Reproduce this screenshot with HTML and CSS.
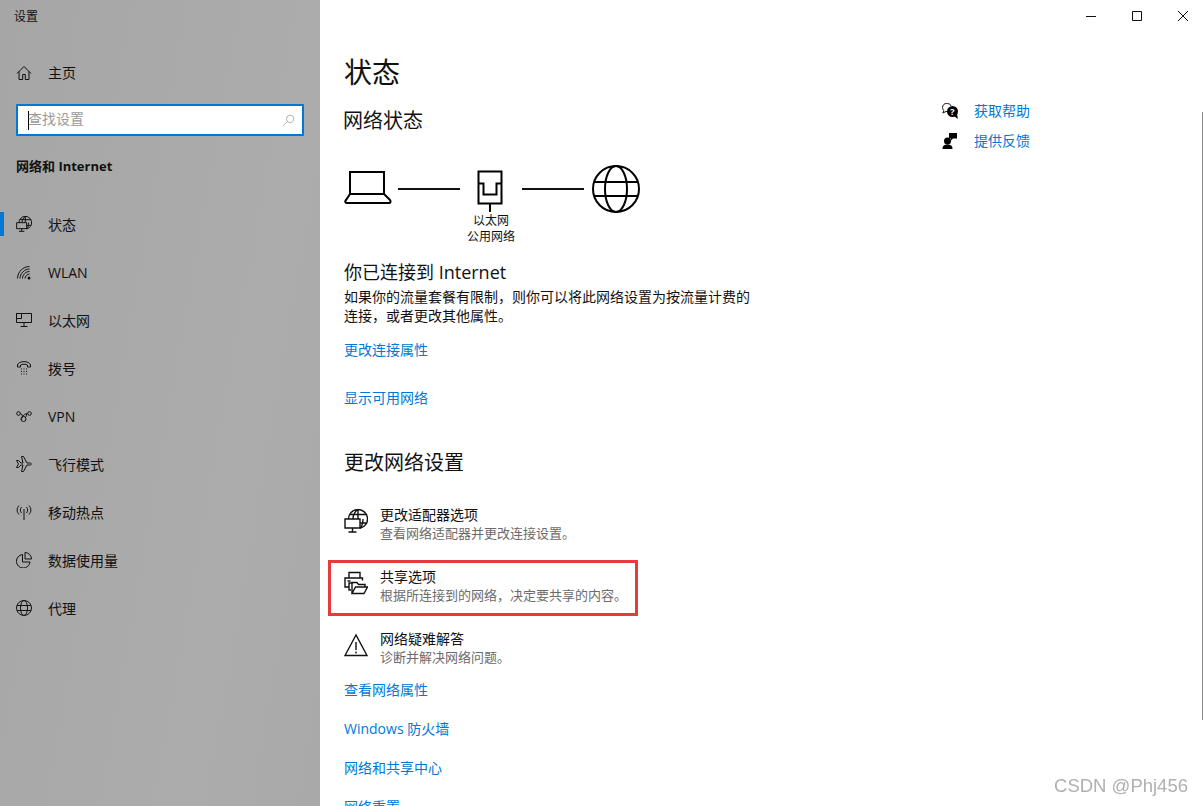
FILE: index.html
```html
<!DOCTYPE html>
<html lang="zh-CN">
<head>
    <meta charset="UTF-8">
    <meta name="viewport" content="width=device-width, initial-scale=1.0">
    <title>设置</title>
    <link rel="stylesheet" href="styles.css">
</head>
<body>
<div class="window">

    <!-- Left navigation -->
    <aside class="sidebar">
        <div class="app-title">设置</div>
        <div class="home-row">
            <svg class="nav-icon" viewBox="0 0 16 16"><path d="M1 8.5 8 1.5l7 7M3 6.5v8h3.7V9.5h2.6v5H13v-8"/></svg>
            <span>主页</span>
        </div>
        <div class="search-box">
            <span class="caret"></span>
            <span class="search-text">查找设置</span>
            <svg class="search-icon" viewBox="0 0 16 16"><circle cx="10" cy="6" r="4.5"/><path d="M6.8 9.2 1.5 14.5"/></svg>
        </div>
        <div class="group-title">网络和 Internet</div>
        <nav class="nav-list">
            <div class="nav-item active">
                <svg class="nav-icon wide-stroke" viewBox="0 0 24 24"><path d="M4.5 10A9.5 9.5 0 1 1 16 19.3M5.6 5.5h16.8M14 .5V10M9 10c0-4 2-7.5 5-9.5M19 10c0 4-1 7-3 9.300M16 14h6.600"/><path d="M1 10h15v9H1zM8.500 19v3.500M4.500 23h8"/></svg>
                <span>状态</span>
            </div>
            <div class="nav-item">
                <svg class="nav-icon" viewBox="0 0 16 16"><path d="M1.5 14.5C1.5 8 7 2.5 13.5 2.5M4 14.500C4 9.500 8.500 5 13.500 5M6.500 14.500c0-3.500 3-7 7-7M9 14.500c0-2 2-4.500 4.500-4.500"/><circle class="solid" cx="13" cy="14" r="1.5"/></svg>
                <span>WLAN</span>
            </div>
            <div class="nav-item">
                <svg class="nav-icon" viewBox="0 0 16 16"><path d="M5.500 1.500h10v9h-15v-9h2M.5 1.500h5v5h-5zM8 10.500v4M4.500 14.500h7"/></svg>
                <span>以太网</span>
            </div>
            <div class="nav-item">
                <svg class="nav-icon" viewBox="0 0 16 16"><path d="M1.500 7V5c1-4.500 12-4.500 13 0v2h-3V5c-1-1-6-1-7 0v2z"/><path class="dots" d="M5 9h6M5 11.500h6M5 14h6"/></svg>
                <span>拨号</span>
            </div>
            <div class="nav-item">
                <svg class="nav-icon" viewBox="0 0 16 16"><circle cx="2.500" cy="5.500" r="1.800"/><circle cx="13.500" cy="5.500" r="1.800"/><circle cx="7.500" cy="11" r="2.500"/><path d="M4.300 5.500c2 0 2 3 2.500 3.500M9.500 9.500c1.500-1 0-4 2.300-4M5.500 12.500c-1-2 3-7 5-7"/></svg>
                <span>VPN</span>
            </div>
            <div class="nav-item">
                <svg class="nav-icon" viewBox="0 0 16 16"><path d="M.5 4.500 2.500 8l-2 3.500h2L5 9h2L5.500 15.500h2L11 9h2.500c2.500 0 2.500-2 0-2H11L7.500.5h-2L7 7H5L2.500 4.500z"/></svg>
                <span>飞行模式</span>
            </div>
            <div class="nav-item">
                <svg class="nav-icon" viewBox="0 0 16 16"><path d="M8 5v11M3 1.500c-2.500 3-2.500 6 0 9M13 1.500c2.500 3 2.500 6 0 9M5.500 3c-1.500 2-1.500 4 0 6M10.500 3c1.500 2 1.500 4 0 6"/></svg>
                <span>移动热点</span>
            </div>
            <div class="nav-item">
                <svg class="nav-icon" viewBox="0 0 16 16"><path d="M6.500 2.500a6.800 6.800 0 1 0 7.500 7.500H6.500zM9 .5a6.500 6.500 0 0 1 6.500 6.500H9z"/></svg>
                <span>数据使用量</span>
            </div>
            <div class="nav-item">
                <svg class="nav-icon" viewBox="0 0 16 16"><circle cx="8" cy="8" r="7.500"/><ellipse cx="8" cy="8" rx="3.500" ry="7.500"/><path d="M1.200 5.500h13.600M1.200 10.500h13.600"/></svg>
                <span>代理</span>
            </div>
        </nav>
    </aside>

    <!-- Right pane -->
    <main class="pane">
        <div class="titlebar">
            <div class="win-btn"><svg viewBox="0 0 10 10"><path d="M0 5.500h10"/></svg></div>
            <div class="win-btn"><svg viewBox="0 0 10 10"><path d="M.5.5h9v9h-9z"/></svg></div>
            <div class="win-btn"><svg viewBox="0 0 10 10"><path d="m0 0 10 10M10 0 0 10"/></svg></div>
        </div>

        <div class="pane-body">
            <section class="content">
                <h1 class="page-title">状态</h1>
                <h2 class="section-title">网络状态</h2>

                <div class="diagram">
                    <svg class="laptop" viewBox="0 0 48 36"><path d="M6 2h34v22H6zM6 24l-4 6c-1.500 1.500-.5 3 1 3h42c1.500 0 2-1.500 1-3l-6-6"/></svg>
                    <span class="link-line"></span>
                    <div class="adapter">
                        <svg viewBox="0 0 26 42"><path d="M1.500 1.500h23v32h-23zM1.500 13.500h5v11h13v-11h5M13 33.500V42"/></svg>
                        <div class="adapter-label">以太网<br>公用网络</div>
                    </div>
                    <span class="link-line second"></span>
                    <svg class="globe" viewBox="0 0 48 48"><circle cx="24" cy="24" r="23"/><ellipse cx="24" cy="24" rx="11" ry="23"/><path d="M3 17h42M3 31h42"/></svg>
                </div>

                <h3 class="connected">你已连接到 Internet</h3>
                <p class="connected-text">如果你的流量套餐有限制，则你可以将此网络设置为按流量计费的连接，或者更改其他属性。</p>
                <a class="link first-link">更改连接属性</a>
                <a class="link second-link">显示可用网络</a>

                <h2 class="section-title change-title">更改网络设置</h2>

                <div class="setting">
                    <svg class="setting-icon" viewBox="0 0 24 24"><path d="M4.500 10A9.500 9.500 0 1 1 16 19.300M5.600 5.500h16.800M14 .5V10M9 10c0-4 2-7.500 5-9.500M19 10c0 4-1 7-3 9.300M16 14h6.600"/><path d="M1 10h15v9H1zM8.500 19v3.500M4.500 23h8"/></svg>
                    <div>
                        <div class="setting-name">更改适配器选项</div>
                        <div class="setting-desc">查看网络适配器并更改连接设置。</div>
                    </div>
                </div>
                <div class="setting marked">
                    <svg class="setting-icon" viewBox="0 0 24 24"><path d="M5 7V1.500h11V7M4.500 16H1V7h17.500v2.500M3.500 10h3M9 12H5v7h2"/><path d="M8 22.500v-11h5l1.500 2H21v3M8 22.500l3.500-6.500h12L20 22.500z"/></svg>
                    <div>
                        <div class="setting-name">共享选项</div>
                        <div class="setting-desc">根据所连接到的网络，决定要共享的内容。</div>
                    </div>
                </div>
                <div class="setting">
                    <svg class="setting-icon" viewBox="0 0 24 24"><path d="M12 2 1 22.500h22zM12 9v8M12 18.500v2"/></svg>
                    <div>
                        <div class="setting-name">网络疑难解答</div>
                        <div class="setting-desc">诊断并解决网络问题。</div>
                    </div>
                </div>

                <a class="link bottom-link">查看网络属性</a>
                <a class="link bottom-link">Windows 防火墙</a>
                <a class="link bottom-link">网络和共享中心</a>
                <a class="link bottom-link">网络重置</a>
            </section>

            <aside class="help">
                <div class="help-row">
                    <svg class="help-icon" viewBox="0 0 16 16"><path d="M9 3C9 1 6 .5 4.500.5 2 .5.500 2.300.500 4.500c0 1.500.8 2.500 1.500 3L.8 10 4 8.500h2"/><circle class="solid" cx="10.500" cy="8.500" r="5.500"/><path class="solid" d="m12 13 4 3-1-5z"/><text class="help-mark" x="10.500" y="11.500">?</text></svg>
                    <a class="link">获取帮助</a>
                </div>
                <div class="help-row">
                    <svg class="help-icon" viewBox="0 0 16 16"><circle class="solid" cx="5.500" cy="8" r="3.500"/><path class="solid" d="M.5 16c0-3.500 2-4.500 5-4.500s5 1 5 4.500zM7 0h8v5.500h-4L9 7.500v-2H7z"/></svg>
                    <a class="link">提供反馈</a>
                </div>
            </aside>
        </div>
    </main>
</div>

<div class="scrollbar"></div>
<div class="watermark">CSDN @Phj456</div>
</body>
</html>
```

FILE: styles.css
```css
* {
    box-sizing: border-box;
}

html, body {
    margin: 0;
    height: 100%;
    overflow: hidden;
}

body {
    font-family: "Open Sans", "Noto Sans CJK SC", sans-serif;
    font-size: 14px;
    color: #111;
    background-color: #fff;
}

.window {
    display: flex;
    height: 806px;
    overflow: hidden;
}

/* Left navigation */
.sidebar {
    width: 320px;
    flex-shrink: 0;
    background: linear-gradient(100deg, #a6a6a6 0%, #acacac 70%, #a9a9a9 100%);
}

.app-title {
    height: 34px;
    padding: 7px 0 0 14px;
    font-size: 12px;
    line-height: 20px;
}

.home-row {
    display: flex;
    align-items: center;
    gap: 16px;
    height: 24px;
    margin-top: 27px;
    padding-left: 16px;
    line-height: 24px;
}

.nav-icon {
    width: 16px;
    height: 16px;
    flex-shrink: 0;
    fill: none;
    stroke: #111;
    stroke-width: 1;
}

.nav-icon.wide-stroke {
    stroke-width: 1.5;
}

.nav-icon .solid {
    fill: #111;
    stroke: none;
}

.nav-icon .dots {
    stroke-dasharray: 1 1.5;
}

.search-box {
    display: flex;
    align-items: center;
    width: 288px;
    height: 32px;
    margin: 19px 0 0 16px;
    padding: 0 7px 0 10px;
    background-color: #fff;
    border: 2px solid #0078d7;
}

.caret {
    width: 1px;
    height: 19px;
    margin-right: -1px;
    background-color: #000;
}

.search-text {
    flex: 1;
    padding-bottom: 4px;
    color: #9a9a9a;
}

.search-icon {
    width: 13px;
    height: 13px;
    fill: none;
    stroke: #a8a8a8;
    stroke-width: 1.1;
}

.group-title {
    margin: 19px 0 0 16px;
    height: 22px;
    line-height: 22px;
    font-weight: 700;
    font-size: 13px;
}

.nav-list {
    margin-top: 23px;
}

.nav-item {
    position: relative;
    display: flex;
    align-items: center;
    gap: 16px;
    height: 48px;
    padding-left: 16px;
}

.nav-item.active::before {
    content: "";
    position: absolute;
    left: 0;
    top: 12px;
    width: 4px;
    height: 24px;
    background-color: #0078d7;
}

/* Right pane */
.pane {
    flex: 1;
    min-width: 0;
}

.titlebar {
    display: flex;
    justify-content: flex-end;
    height: 32px;
    margin-right: -3px;
}

.win-btn {
    display: flex;
    align-items: center;
    justify-content: center;
    width: 46px;
    height: 32px;
}

.win-btn svg {
    width: 10px;
    height: 10px;
    fill: none;
    stroke: #111;
    stroke-width: 1;
}

.pane-body {
    display: flex;
    padding: 20px 0 0 24px;
}

.content {
    width: 598px;
    flex-shrink: 0;
}

.page-title {
    margin: 0;
    height: 40px;
    line-height: 40px;
    font-size: 28px;
    font-weight: 400;
}

.section-title {
    margin: 15px 0 0 -1px;
    height: 28px;
    line-height: 28px;
    font-size: 20px;
    font-weight: 400;
}

.diagram {
    display: flex;
    align-items: flex-start;
    height: 94px;
    margin-top: 30px;
}

.laptop {
    width: 48px;
    height: 36px;
    margin-top: 5px;
    fill: none;
    stroke: #000;
    stroke-width: 2;
}

.link-line {
    width: 62px;
    height: 2px;
    margin: 23px 0 0 6px;
    background-color: #111;
}

.link-line.second {
    margin-left: 0;
}

.adapter {
    position: relative;
    width: 62px;
    padding-left: 17px;
}

.adapter svg {
    display: block;
    width: 26px;
    height: 42px;
    margin-top: 5px;
    fill: none;
    stroke: #000;
    stroke-width: 2;
}

.adapter-label {
    position: absolute;
    top: 48px;
    left: -9px;
    width: 80px;
    text-align: center;
    font-size: 12px;
    line-height: 16px;
}

.globe {
    width: 48px;
    height: 48px;
    margin-left: 8px;
    fill: none;
    stroke: #000;
    stroke-width: 2;
}

.connected {
    margin: 0;
    height: 26px;
    line-height: 26px;
    font-size: 18px;
    font-weight: 400;
}

.connected-text {
    width: 410px;
    margin: 2px 0 0;
    font-size: 14px;
    line-height: 19px;
}

.link {
    display: block;
    color: #0078d7;
    font-size: 14px;
    line-height: 20px;
}

.first-link {
    margin-top: 15px;
}

.second-link {
    margin-top: 28px;
}

.section-title.change-title {
    margin: 41px 0 0;
}

.setting {
    position: relative;
    display: flex;
    gap: 12px;
    height: 36px;
    margin-top: 26px;
}

.change-title + .setting {
    margin-top: 29px;
}

.setting-icon {
    width: 24px;
    height: 24px;
    margin-top: 3px;
    flex-shrink: 0;
    fill: none;
    stroke: #111;
    stroke-width: 1.4;
}

.setting-name {
    line-height: 18px;
    font-size: 14px;
}

.setting-desc {
    line-height: 18px;
    font-size: 13px;
    color: #6b6b6b;
    white-space: nowrap;
}

/* Red annotation around the sharing option */
.setting.marked::after {
    content: "";
    box-sizing: border-box;
    position: absolute;
    left: -16px;
    top: -8px;
    width: 310px;
    height: 56px;
    border: 3px solid #e83a3a;
}

.bottom-link {
    margin-top: 19px;
}

.setting + .bottom-link {
    margin-top: 14px;
}

/* Help links on the right */
.help {
    margin-top: 44px;
}

.help-row {
    display: flex;
    align-items: center;
    gap: 16px;
    height: 30px;
}

.help-icon {
    width: 16px;
    height: 16px;
    fill: none;
    stroke: #111;
    stroke-width: 1;
}

.help-icon .solid {
    fill: #000;
    stroke: none;
}

.help-mark {
    fill: #fff;
    stroke: none;
    font-size: 9px;
    font-weight: 700;
    text-anchor: middle;
}

.scrollbar {
    position: fixed;
    right: 0;
    top: 112px;
    width: 1px;
    height: 608px;
    background-color: #8a8a8a;
}

.watermark {
    position: fixed;
    right: 15px;
    top: 773px;
    font-family: "Liberation Sans", sans-serif;
    font-size: 18.5px;
    line-height: 26px;
    color: #b0b0b0;
}
```
